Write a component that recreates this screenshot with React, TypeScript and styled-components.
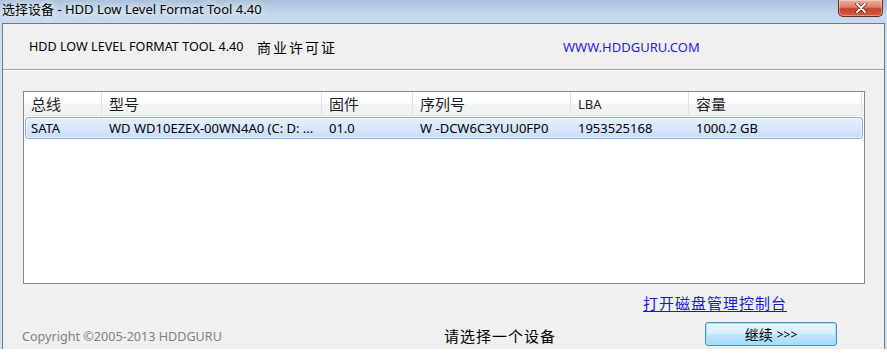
import React from "react";
import styled, { createGlobalStyle } from "styled-components";

const GlobalStyle = createGlobalStyle`
  html, body {
    margin: 0;
    padding: 0;
    background: #ffffff;
  }
  body {
    font-family: "Noto Sans", "Noto Sans CJK SC", sans-serif;
    color: #000;
  }
`;

const UI_FONT = `"Noto Sans", "Noto Sans CJK SC", sans-serif`;
const CJK_FONT = `"Noto Sans CJK SC", "Noto Sans", sans-serif`;

const Window = styled.div`
  width: 887px;
  height: 349px;
  display: flex;
  flex-direction: column;
  background: linear-gradient(180deg, #a9c1dc 0px, #c4d7ec 14px, #cfe0f1 40px, #d3e2f2 100%);
`;

const TitleBar = styled.div`
  height: 23px;
  display: flex;
  align-items: flex-start;
  justify-content: space-between;
`;

const Caption = styled.div`
  font-family: ${UI_FONT};
  font-size: 13px;
  line-height: 19px;
  padding-left: 2px;
  color: #000;
  text-shadow: 0 0 6px rgba(255, 255, 255, 0.95), 0 0 10px rgba(255, 255, 255, 0.8);
`;

const CloseButton = styled.div`
  width: 45px;
  height: 17px;
  margin-right: 4px;
  box-sizing: border-box;
  border: 1px solid #6b2a20;
  border-top: none;
  border-radius: 0 0 5px 5px;
  background: linear-gradient(180deg, #eeb09f 0%, #dc7c66 45%, #c2412a 55%, #d55d3e 100%);
  box-shadow: inset 0 0 0 1px rgba(255, 255, 255, 0.35);
  display: flex;
  align-items: center;
  justify-content: center;
`;

const Body = styled.div`
  flex: 1;
  display: flex;
  padding: 0 2px;
`;

const Client = styled.div`
  flex: 1;
  display: flex;
  flex-direction: column;
  background: #f0f0f0;
  border: 1px solid #6c7b8b;
  border-bottom: none;
`;

const Header = styled.div`
  height: 45px;
  display: grid;
  grid-template-columns: 228px 306px auto;
  align-items: center;
  padding-left: 26px;
  border-bottom: 1px solid #a0a0a0;
  box-shadow: 0 1px 0 #ffffff;
`;

const ProductName = styled.span`
  font-family: ${UI_FONT};
  font-size: 12.6px;
  color: #000;
`;

const License = styled.span`
  font-family: ${CJK_FONT};
  font-size: 14px;
  letter-spacing: 2px;
  color: #000;
`;

const SiteLink = styled.span`
  font-family: ${UI_FONT};
  font-size: 13px;
  color: #1f1fe6;
`;

const ListView = styled.div`
  margin: 21px 19px 0 20px;
  height: 193px;
  box-sizing: border-box;
  border: 1px solid #828790;
  background: #ffffff;
`;

const HeaderRow = styled.div`
  display: grid;
  grid-template-columns: 78px 220px 91px 158px 118px 173px;
  height: 23px;
  background: linear-gradient(180deg, #ffffff 0%, #ffffff 45%, #f3f4f6 55%, #f1f2f4 100%);
  border-bottom: 1px solid #e4e5e7;
`;

const HeaderCell = styled.div<{ $latin?: boolean }>`
  padding-left: 7px;
  border-right: 1px solid #dfe1e4;
  display: flex;
  align-items: center;
  font-family: ${(p) => (p.$latin ? UI_FONT : CJK_FONT)};
  font-size: ${(p) => (p.$latin ? "13px" : "15px")};
  color: #1e1e1e;
`;

const DataRow = styled.div<{ $selected?: boolean }>`
  display: grid;
  grid-template-columns: 76px 220px 91px 158px 118px 172px;
  height: 22px;
  box-sizing: border-box;
  margin: 1px 0 0 1px;
  width: 838px;
  border: 1px solid ${(p) => (p.$selected ? "#84acdd" : "transparent")};
  border-radius: 3px;
  background: ${(p) =>
    p.$selected ? "linear-gradient(180deg, #e4effc 0%, #d8e7f9 50%, #c9ddf6 100%)" : "transparent"};
  box-shadow: ${(p) => (p.$selected ? "inset 0 0 0 1px rgba(255,255,255,0.6)" : "none")};
`;

const DataCell = styled.div<{ $first?: boolean }>`
  padding-left: ${(p) => (p.$first ? "5px" : "7px")};
  display: flex;
  align-items: center;
  white-space: nowrap;
  overflow: hidden;
  font-family: ${UI_FONT};
  font-size: 13px;
  color: #000;
`;

const LinkRow = styled.div`
  display: flex;
  justify-content: flex-end;
  padding-right: 97px;
  margin-top: 8px;
  height: 20px;
  align-items: center;
`;

const DiskLink = styled.a`
  font-family: ${CJK_FONT};
  font-size: 15px;
  letter-spacing: 1px;
  color: #1a1ad0;
  text-decoration: underline;
  text-underline-offset: 2px;
  cursor: pointer;
`;

const Footer = styled.div`
  display: grid;
  grid-template-columns: 422px 261px 132px;
  padding-left: 19px;
  margin-top: 10px;
  align-items: end;
`;

const Copyright = styled.span`
  font-family: ${UI_FONT};
  font-size: 12.6px;
  color: #808080;
  padding-bottom: 1px;
`;

const Status = styled.span`
  font-family: ${CJK_FONT};
  font-size: 15px;
  letter-spacing: 1px;
  color: #000;
`;

const ContinueButton = styled.button`
  height: 24px;
  box-sizing: border-box;
  border: 1px solid #3c93c9;
  border-radius: 3px;
  background: linear-gradient(180deg, #eaf6fd 0%, #d9f0fc 45%, #bee6fd 55%, #a7d9f5 100%);
  box-shadow: inset 0 0 0 1px #a8e0fb;
  font-family: ${CJK_FONT};
  font-size: 14px;
  color: #000;
  padding: 0;
  display: flex;
  align-items: center;
  justify-content: center;
  gap: 4px;
`;

const Arrows = styled.span`
  font-family: ${UI_FONT};
  font-size: 12px;
`;

const columns = [
  { title: "总线" },
  { title: "型号" },
  { title: "固件" },
  { title: "序列号" },
  { title: "LBA", latin: true },
  { title: "容量" },
];

const devices = [
  {
    bus: "SATA",
    model: "WD WD10EZEX-00WN4A0 (C: D: ...",
    firmware: "01.0",
    serial: "W -DCW6C3YUU0FP0",
    lba: "1953525168",
    size: "1000.2 GB",
  },
];

export default function App() {
  return (
    <>
      <GlobalStyle />
      <Window>
        <TitleBar>
          <Caption>选择设备 - HDD Low Level Format Tool 4.40</Caption>
          <CloseButton>
            <svg width="12" height="10" viewBox="0 0 12 10">
              <path d="M2 1 L10 9 M10 1 L2 9" stroke="#5a2018" strokeWidth="3.4" strokeLinecap="round" />
              <path d="M2 1 L10 9 M10 1 L2 9" stroke="#ffffff" strokeWidth="2" strokeLinecap="round" />
            </svg>
          </CloseButton>
        </TitleBar>
        <Body>
          <Client>
            <Header>
              <ProductName>HDD LOW LEVEL FORMAT TOOL 4.40</ProductName>
              <License>商业许可证</License>
              <SiteLink>WWW.HDDGURU.COM</SiteLink>
            </Header>

            <ListView>
              <HeaderRow>
                {columns.map((c) => (
                  <HeaderCell key={c.title} $latin={c.latin}>
                    {c.title}
                  </HeaderCell>
                ))}
              </HeaderRow>
              {devices.map((d) => (
                <DataRow key={d.serial} $selected>
                  <DataCell $first>{d.bus}</DataCell>
                  <DataCell>{d.model}</DataCell>
                  <DataCell>{d.firmware}</DataCell>
                  <DataCell>{d.serial}</DataCell>
                  <DataCell>{d.lba}</DataCell>
                  <DataCell>{d.size}</DataCell>
                </DataRow>
              ))}
            </ListView>

            <LinkRow>
              <DiskLink>打开磁盘管理控制台</DiskLink>
            </LinkRow>

            <Footer>
              <Copyright>Copyright ©2005-2013 HDDGURU</Copyright>
              <Status>请选择一个设备</Status>
              <ContinueButton>
                继续 <Arrows>&gt;&gt;&gt;</Arrows>
              </ContinueButton>
            </Footer>
          </Client>
        </Body>
      </Window>
    </>
  );
}
